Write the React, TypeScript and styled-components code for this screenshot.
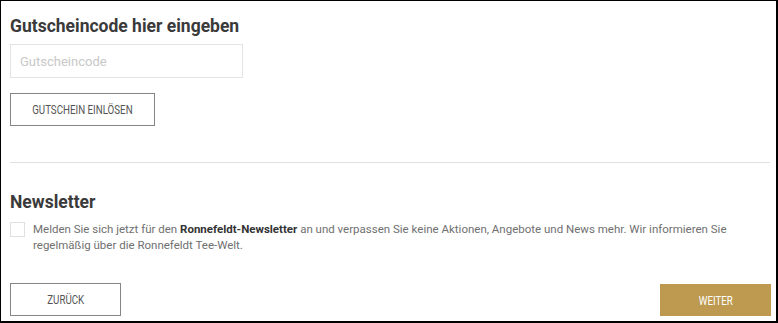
import React from "react";
import styled, { createGlobalStyle } from "styled-components";

const GlobalStyle = createGlobalStyle`
  html, body {
    margin: 0;
    padding: 0;
    background: #ffffff;
  }
  * {
    box-sizing: border-box;
  }
`;

const Frame = styled.div`
  width: 778px;
  height: 323px;
  border-top: 1px solid #000;
  border-left: 1px solid #000;
  border-right: 2px solid #000;
  border-bottom: 2px solid #000;
  padding: 15px 6px 0 9px;
  display: flex;
  flex-direction: column;
  font-family: Roboto, "Liberation Sans", sans-serif;
  color: #333;
  overflow: hidden;
`;

const Heading = styled.h2`
  margin: 0;
  font-size: 17.5px;
  font-weight: 700;
  line-height: 20px;
  color: #3a3a3a;
`;

const CodeInput = styled.input`
  margin-top: 8px;
  width: 233px;
  height: 34px;
  border: 1px solid #e3e3e3;
  padding: 0 9px;
  font-family: Roboto, "Liberation Sans", sans-serif;
  font-size: 13px;
  color: #333;
  outline: none;
  &::placeholder {
    color: #c8c8c8;
  }
`;

const OutlineButton = styled.button<{ $width: number }>`
  width: ${(p) => p.$width}px;
  height: 33px;
  background: #fff;
  border: 1px solid #858585;
  color: #555;
  padding: 0;
  cursor: pointer;
`;

const GoldButton = styled.button`
  width: 111px;
  height: 32px;
  background: #bd9a50;
  border: none;
  color: #fff;
  padding: 0;
  cursor: pointer;
`;

const Label = styled.span`
  display: inline-block;
  font-family: Roboto, "Liberation Sans", sans-serif;
  font-size: 12.5px;
  text-transform: uppercase;
  transform: scaleX(0.78);
`;

const ButtonRow = styled.div`
  margin-top: 15px;
`;

const Divider = styled.hr`
  margin: 36px 0 0 0;
  border: none;
  border-top: 1px solid #e0e0e0;
  width: 760px;
`;

const NewsHeading = styled(Heading)`
  margin-top: 29px;
`;

const CheckRow = styled.label`
  margin-top: 9px;
  display: flex;
  align-items: flex-start;
  gap: 8px;
`;

const Box = styled.span`
  flex: none;
  width: 15px;
  height: 15px;
  border: 1px solid #e0e0e0;
  margin-top: 1px;
`;

const CheckText = styled.p`
  margin: 0;
  font-size: 11.5px;
  line-height: 16px;
  color: #707070;
  width: 700px;
  b {
    color: #333;
  }
`;

const Footer = styled.div`
  margin-top: auto;
  margin-bottom: 5px;
  width: 761px;
  display: flex;
  justify-content: space-between;
  align-items: flex-end;
`;

export default function App() {
  return (
    <>
      <GlobalStyle />
      <Frame>
        <Heading>Gutscheincode hier eingeben</Heading>
        <CodeInput placeholder="Gutscheincode" />
        <ButtonRow>
          <OutlineButton $width={145}>
            <Label>Gutschein einlösen</Label>
          </OutlineButton>
        </ButtonRow>
        <Divider />
        <NewsHeading>Newsletter</NewsHeading>
        <CheckRow>
          <Box />
          <CheckText>
            Melden Sie sich jetzt für den <b>Ronnefeldt-Newsletter</b> an und verpassen Sie keine
            Aktionen, Angebote und News mehr. Wir informieren Sie regelmäßig über die Ronnefeldt
            Tee-Welt.
          </CheckText>
        </CheckRow>
        <Footer>
          <OutlineButton $width={111}>
            <Label>Zurück</Label>
          </OutlineButton>
          <GoldButton>
            <Label>Weiter</Label>
          </GoldButton>
        </Footer>
      </Frame>
    </>
  );
}
